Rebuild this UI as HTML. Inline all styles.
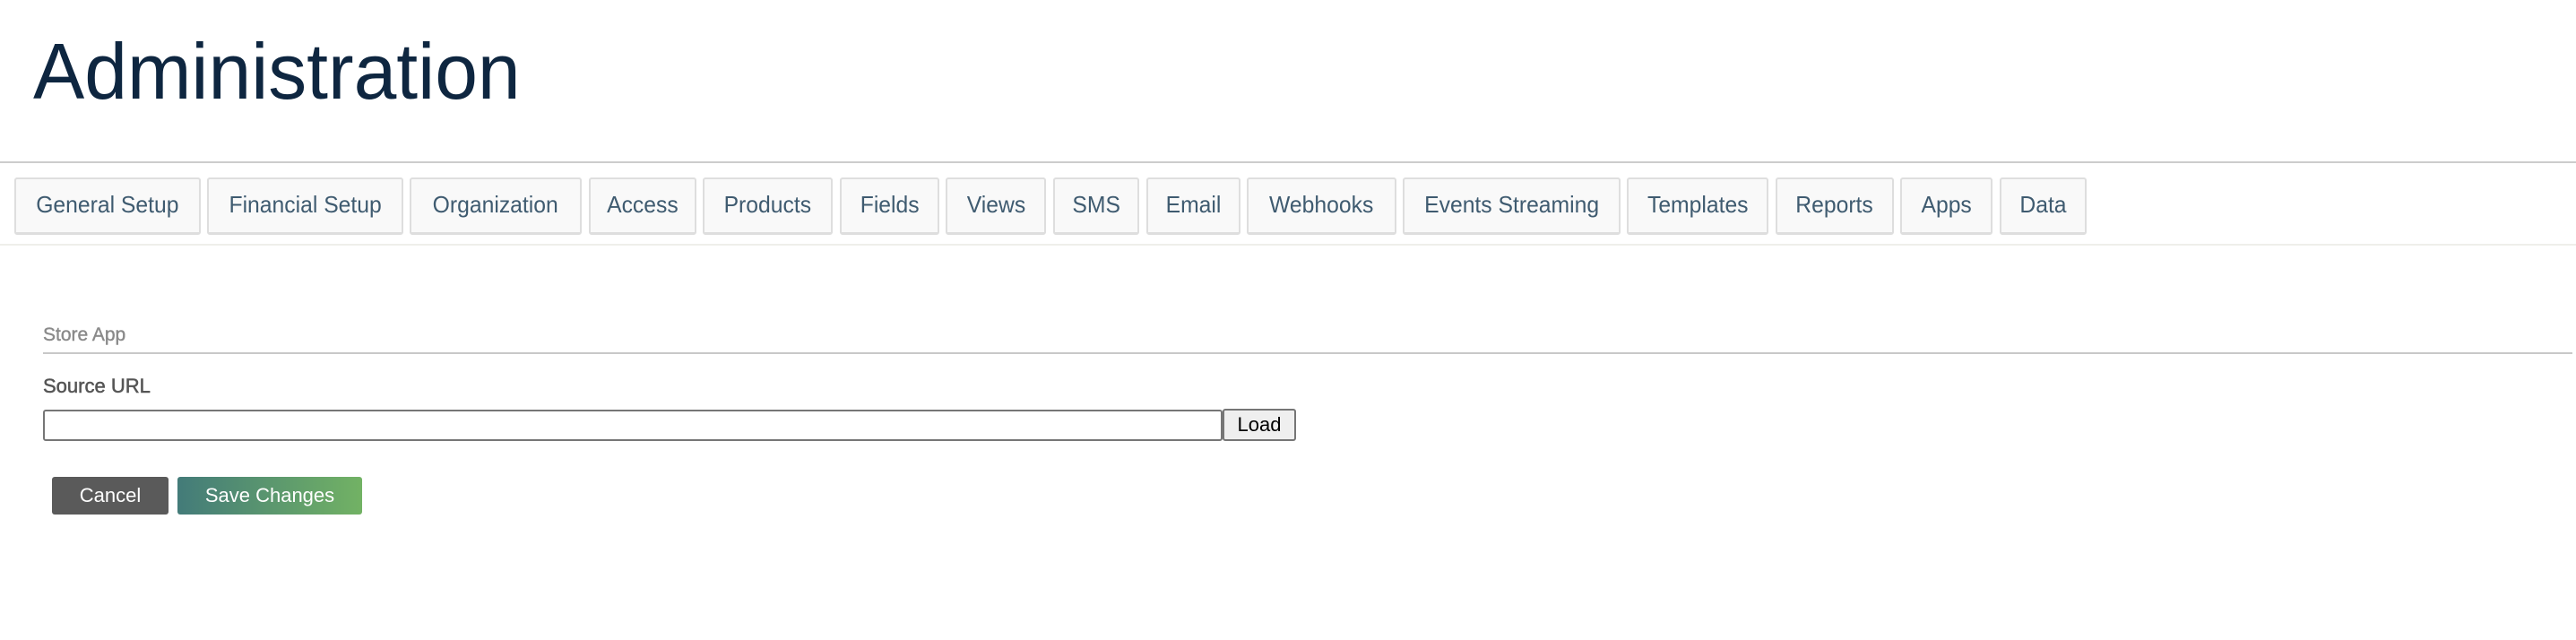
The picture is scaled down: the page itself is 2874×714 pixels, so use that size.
<!DOCTYPE html>
<html><head><meta charset="utf-8">
<style>
*{box-sizing:border-box;margin:0;padding:0}
body{width:2874px;height:714px;background:#fff;font-family:"Liberation Sans",sans-serif;position:relative;overflow:hidden}
.abs{position:absolute}
h1{position:absolute;left:37px;top:30px;font-weight:normal;font-size:88px;line-height:100px;color:#0e2640;transform:scaleX(0.975);transform-origin:left;white-space:nowrap}
.tab{position:absolute;top:198px;height:64px;background:#f9f9f9;border:2px solid #dedede;border-bottom-width:3px;border-radius:3px;color:#3f5b70;font-size:26px;display:flex;align-items:center;justify-content:center;white-space:nowrap;padding-bottom:2px}
.tab span{display:inline-block;transform:scaleX(0.95)}
.btn{position:absolute;top:532px;height:42px;border-radius:3px;color:#fff;font-size:22px;display:flex;align-items:center;justify-content:center}
</style></head><body>
<h1>Administration</h1>
<div class="abs" style="left:0;top:180px;width:2874px;height:2px;background:#cccccc"></div>
<div class="tab" style="left:16px;width:208px"><span>General Setup</span></div>
<div class="tab" style="left:231px;width:219px"><span>Financial Setup</span></div>
<div class="tab" style="left:457px;width:192px"><span>Organization</span></div>
<div class="tab" style="left:657px;width:120px"><span>Access</span></div>
<div class="tab" style="left:784px;width:145px"><span>Products</span></div>
<div class="tab" style="left:937px;width:111px"><span>Fields</span></div>
<div class="tab" style="left:1055px;width:112px"><span>Views</span></div>
<div class="tab" style="left:1175px;width:96px"><span>SMS</span></div>
<div class="tab" style="left:1279px;width:105px"><span>Email</span></div>
<div class="tab" style="left:1391px;width:167px"><span>Webhooks</span></div>
<div class="tab" style="left:1565px;width:243px"><span>Events Streaming</span></div>
<div class="tab" style="left:1815px;width:158px"><span>Templates</span></div>
<div class="tab" style="left:1981px;width:132px"><span>Reports</span></div>
<div class="tab" style="left:2120px;width:103px"><span>Apps</span></div>
<div class="tab" style="left:2231px;width:97px"><span>Data</span></div>
<div class="abs" style="left:0;top:272px;width:2874px;height:2px;background:#efefea"></div>

<div class="abs" style="left:48px;top:362px;font-size:21px;color:#8a8a8a;-webkit-text-stroke:0.4px #8a8a8a">Store App</div>
<div class="abs" style="left:48px;top:393px;width:2822px;height:2px;background:#c8c8c8"></div>
<div class="abs" style="left:48px;top:418px;font-size:22px;color:#555;-webkit-text-stroke:0.5px #555">Source URL</div>
<div class="abs" style="left:48px;top:457px;width:1316px;height:35px;border:2px solid #767676;border-radius:3px"></div>
<div class="abs" style="left:1364px;top:456px;width:82px;height:36px;border:2px solid #767676;border-radius:3px;background:#efefef;font-size:22px;color:#000;display:flex;align-items:center;justify-content:center">Load</div>

<div class="btn" style="left:58px;width:130px;background:#5a5a5a">Cancel</div>
<div class="btn" style="left:198px;width:206px;background:linear-gradient(90deg,#437b79,#72b264)">Save Changes</div>
</body></html>
